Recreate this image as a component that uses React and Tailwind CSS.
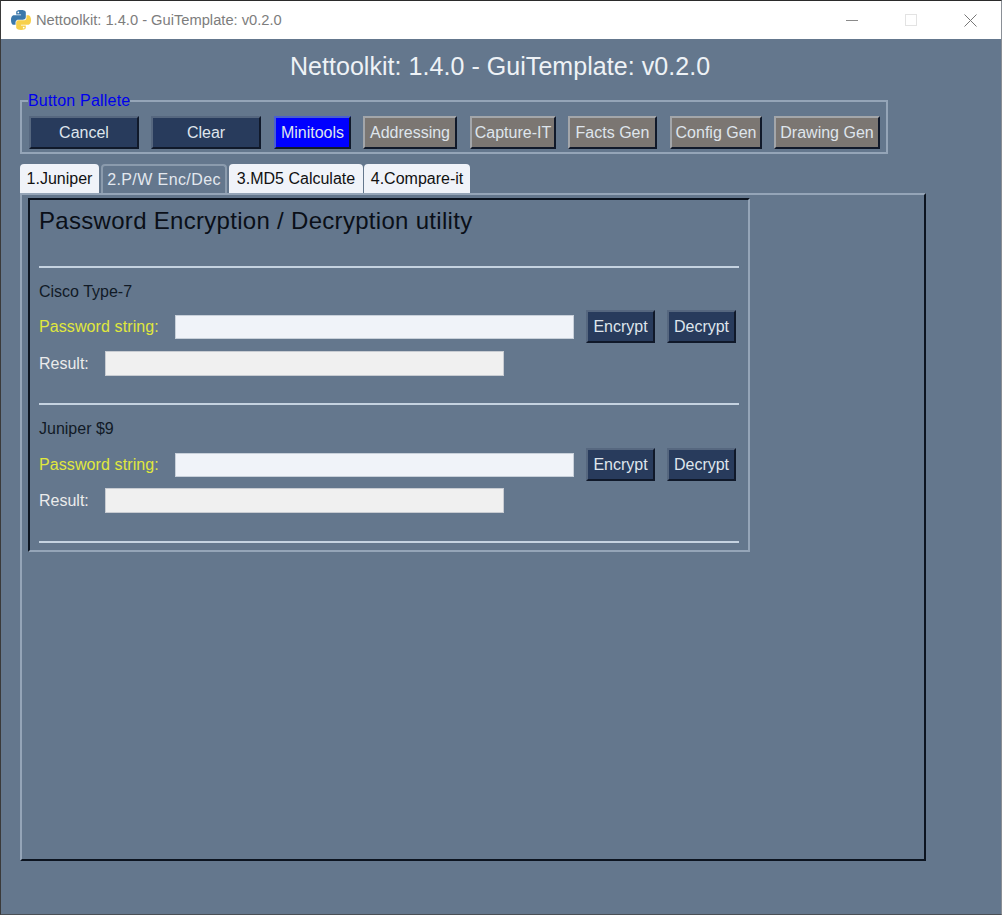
import React from 'react';

const NAVY = 'bg-[#283b5c] border-t-[#56677f] border-l-[#56677f]';
const GRAY = 'bg-[#7b7672] border-t-[#a3a6aa] border-l-[#a3a6aa]';

const PALETTE = [
  { label: 'Cancel', w: 'w-[110px]', mr: 'mr-[12px]', tone: NAVY },
  { label: 'Clear', w: 'w-[110px]', mr: 'mr-[13px]', tone: NAVY },
  { label: 'Minitools', w: 'w-[77px]', mr: 'mr-[12px]', tone: 'bg-[#0000ff] border-t-[#4a5fd0] border-l-[#4a5fd0]' },
  { label: 'Addressing', w: 'w-[94px]', mr: 'mr-[13px]', tone: GRAY },
  { label: 'Capture-IT', w: 'w-[86px]', mr: 'mr-[12px]', tone: GRAY },
  { label: 'Facts Gen', w: 'w-[89px]', mr: 'mr-[13px]', tone: GRAY },
  { label: 'Config Gen', w: 'w-[92px]', mr: 'mr-[12px]', tone: GRAY },
  { label: 'Drawing Gen', w: 'w-[106px]', mr: 'mr-0', tone: GRAY },
];

const TABS = [
  { label: '1.Juniper', w: 'w-[79px]', mr: 'mr-[2px]' },
  { label: '2.P/W Enc/Dec', w: 'w-[126px]', mr: 'mr-[2px]', active: true },
  { label: '3.MD5 Calculate', w: 'w-[134px]', mr: 'mr-[1px]' },
  { label: '4.Compare-it', w: 'w-[106px]', mr: 'mr-0' },
];

const PythonIcon = () => (
  <svg viewBox="0 0 110 110" className="w-[20px] h-[20px] shrink-0">
    <path
      fill="#3b78ab"
      d="M54.9 0C26.9 0 28.6 12.1 28.6 12.1l.03 12.6h26.7v3.8H18S0 26.4 0 54.6c0 28.2 15.6 27.2 15.6 27.2h9.3V68.7s-.5-15.6 15.3-15.6h26.5s14.8.2 14.8-14.3V14.8S83.8 0 54.9 0zM40.2 8.4a4.8 4.8 0 110 9.6 4.8 4.8 0 010-9.6z"
    />
    <path
      fill="#f7d04a"
      transform="rotate(180 55 55)"
      d="M54.9 0C26.9 0 28.6 12.1 28.6 12.1l.03 12.6h26.7v3.8H18S0 26.4 0 54.6c0 28.2 15.6 27.2 15.6 27.2h9.3V68.7s-.5-15.6 15.3-15.6h26.5s14.8.2 14.8-14.3V14.8S83.8 0 54.9 0zM40.2 8.4a4.8 4.8 0 110 9.6 4.8 4.8 0 010-9.6z"
    />
  </svg>
);

const WindowControls = () => (
  <div className="flex items-center ml-auto">
    <svg viewBox="0 0 12 12" className="w-[12px] h-[12px] mr-[47px]">
      <path d="M0 6.5h12" stroke="#8a8a8a" strokeWidth="1" />
    </svg>
    <svg viewBox="0 0 12 12" className="w-[12px] h-[12px] mr-[47px]">
      <rect x="0.5" y="0.5" width="11" height="11" fill="none" stroke="#e3e3e3" strokeWidth="1" />
    </svg>
    <svg viewBox="0 0 13 13" className="w-[13px] h-[13px] mr-[24px]">
      <path d="M.5.5l12 12M12.5.5l-12 12" stroke="#777777" strokeWidth="1" fill="none" />
    </svg>
  </div>
);

const RaisedButton = ({ label, className }) => (
  <button
    className={`flex items-center justify-center shrink-0 h-[33px] text-[16px] text-[#dfe5ec] border-2 border-r-[#10192a] border-b-[#10192a] ${className}`}
  >
    {label}
  </button>
);

const Divider = () => <div className="h-[2px] bg-[#c5d2e0]" />;

// the second block sits 1px lower on its password row, hence the gap props
const CipherBlock = ({ name, rowGap, resultGap, gap }) => (
  <div>
    <div className="h-[18px] mt-[15px] text-[16px] leading-[18px] text-[#111a26]">{name}</div>
    <div className={`flex items-center h-[33px] ${rowGap}`}>
      <span className="w-[136px] text-[16px] tracking-[0.1px] text-[#e0e83c]">Password string:</span>
      <div className="w-[399px] h-[24px] bg-[#f0f3f9] border border-[#c8d0da]" />
      <RaisedButton label="Encrypt" className={`w-[69px] ml-[12px] ${NAVY}`} />
      <RaisedButton label="Decrypt" className={`w-[69px] ml-[12px] ${NAVY}`} />
    </div>
    <div className={`flex items-center h-[33px] ${resultGap}`}>
      <span className="w-[66px] text-[16px] text-[#ebebeb]">Result:</span>
      <div className="w-[399px] h-[25px] bg-[#f0f0f0] border border-[#c8ccd2]" />
    </div>
    <div className={gap}>
      <Divider />
    </div>
  </div>
);

export default function App() {
  return (
    <div className="w-[1002px] h-[915px] flex flex-col overflow-hidden bg-[#64778d] border-t border-l border-r border-b border-t-[#2b2b2b] border-l-[#3a3a3a] border-r-[#8a8f96] border-b-[#4a4f55] font-['Liberation_Sans',Arial,sans-serif]">
      <div className="h-[38px] shrink-0 bg-white flex items-center pl-[10px]">
        <PythonIcon />
        <span className="ml-[5px] text-[14.7px] text-[#7d7d7d]">Nettoolkit: 1.4.0 - GuiTemplate: v0.2.0</span>
        <WindowControls />
      </div>

      <div className="flex-1 pl-[19px]">
        <div className="w-[960px] h-[55px] flex items-center justify-center text-[25px] tracking-[0.05px] text-[#eef2f6]">
          Nettoolkit: 1.4.0 - GuiTemplate: v0.2.0
        </div>

        <fieldset className="w-[868px] h-[60px] border-2 border-[#95a5b8]">
          <legend className="text-[16px] leading-[14px] tracking-[0.2px] text-[#0000ee] ml-[6px]">Button Pallete</legend>
          <div className="flex mt-[8px] pl-[7px]">
            {PALETTE.map((b) => (
              <RaisedButton key={b.label} label={b.label} className={`${b.w} ${b.mr} ${b.tone}`} />
            ))}
          </div>
        </fieldset>

        <div className="flex mt-[10px] h-[29px]">
          {TABS.map((t) => (
            <div
              key={t.label}
              className={`${t.w} ${t.mr} flex items-center justify-center rounded-t-[4px] text-[16px] ${
                t.active
                  ? 'bg-[#64778d] text-[#e3e8ef] tracking-[0.4px] border-t-2 border-l-2 border-r-2 border-[#8b9bad]'
                  : 'bg-[#f0f3f9] text-[#111111]'
              }`}
            >
              {t.label}
            </div>
          ))}
        </div>

        <div className="w-[906px] h-[668px] pl-[6px] pt-[3px] border-2 border-t-[#95a5b8] border-l-[#95a5b8] border-r-[#0c1420] border-b-[#0c1420]">
          <div className="w-[722px] h-[354px] px-[9px] border-2 border-t-[#0c1420] border-l-[#0c1420] border-r-[#95a5b8] border-b-[#95a5b8]">
            <div className="h-[66px] pt-[6px] text-[24px] leading-[30px] tracking-[0.3px] text-[#0a0f18]">
              Password Encryption / Decryption utility
            </div>
            <Divider />
            <CipherBlock name="Cisco Type-7" rowGap="mt-[9px]" resultGap="mt-[4px]" gap="mt-[23px]" />
            <CipherBlock name="Juniper $9" rowGap="mt-[10px]" resultGap="mt-[3px]" gap="mt-[24px]" />
          </div>
        </div>
      </div>
    </div>
  );
}
